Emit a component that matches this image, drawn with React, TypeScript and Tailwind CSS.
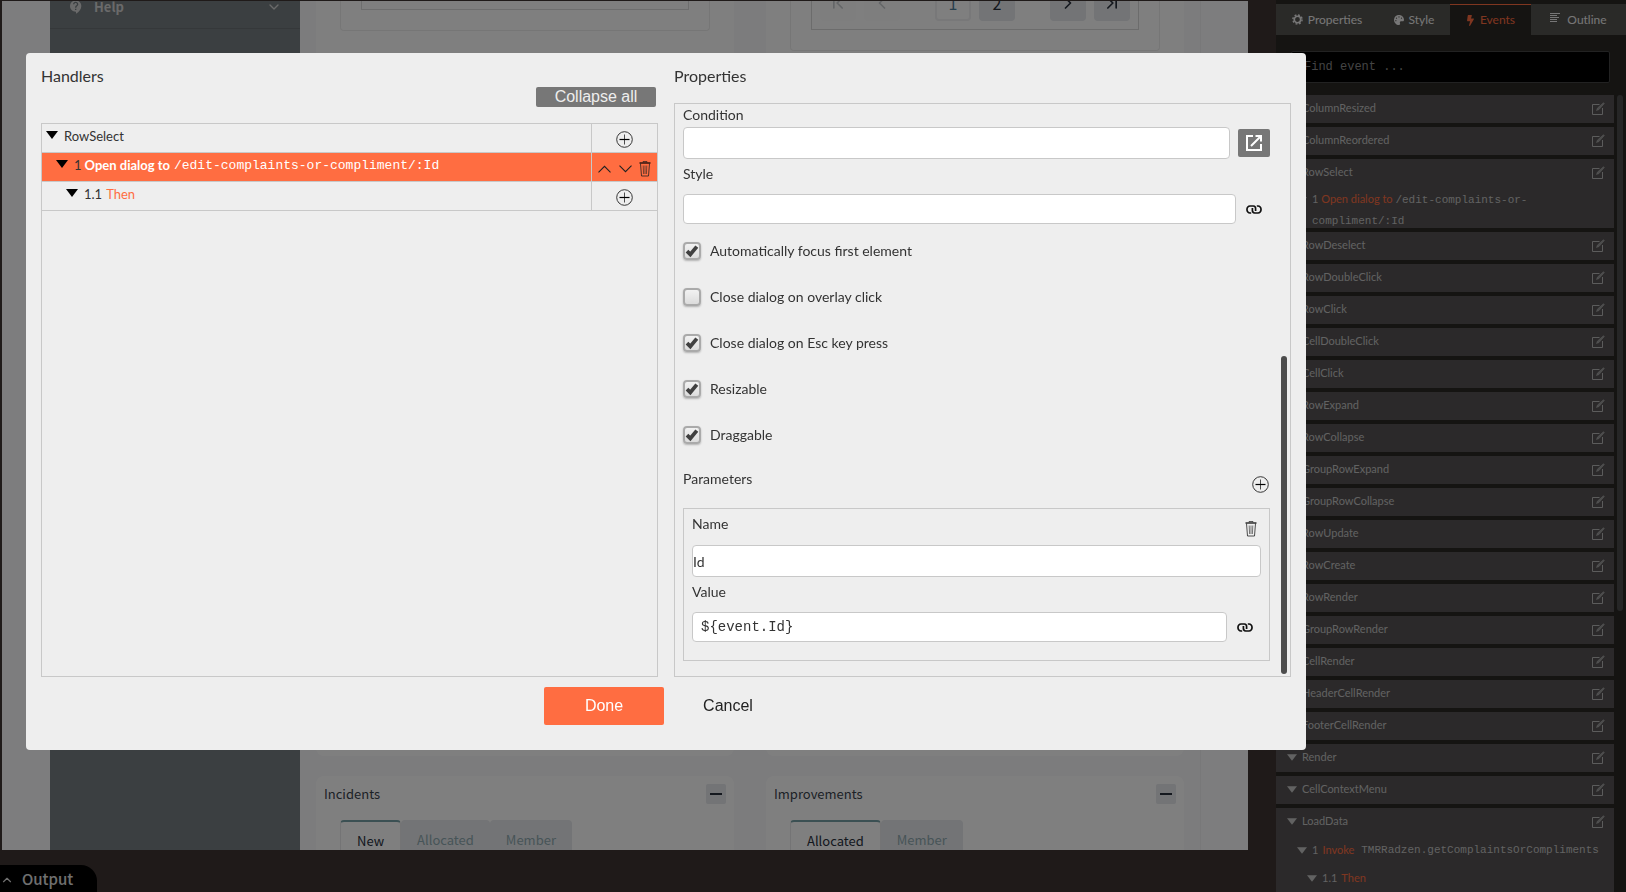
import { useState } from 'react';
import { FaBolt, FaPalette } from 'react-icons/fa';
import { MdContactSupport } from 'react-icons/md';
import { ChevronDown, ChevronFirst, ChevronLast, ChevronLeft, ChevronRight, ChevronUp } from 'lucide-react';

const EVENTS_BEFORE = ['ColumnResized', 'ColumnReordered'];

const EVENTS_AFTER = [
  'RowDeselect',
  'RowDoubleClick',
  'RowClick',
  'CellDoubleClick',
  'CellClick',
  'RowExpand',
  'RowCollapse',
  'GroupRowExpand',
  'GroupRowCollapse',
  'RowUpdate',
  'RowCreate',
  'RowRender',
  'GroupRowRender',
  'CellRender',
  'HeaderCellRender',
  'FooterCellRender',
  'Render',
  'CellContextMenu',
];

const OPTIONS = [
  { id: 'focus', label: 'Automatically focus first element', checked: true },
  { id: 'overlay', label: 'Close dialog on overlay click', checked: false },
  { id: 'esc', label: 'Close dialog on Esc key press', checked: true },
  { id: 'resizable', label: 'Resizable', checked: true },
  { id: 'draggable', label: 'Draggable', checked: true },
];

/* ---------- icons ---------- */

function Triangle({ className }: { className: string }) {
  return (
    <svg viewBox="0 0 12 8" className={className} fill="currentColor">
      <path d="M0 0h12L6 8z" />
    </svg>
  );
}

function PlusCircle() {
  return (
    <svg viewBox="0 0 17 17" className="h-[17px] w-[17px]" fill="none" stroke="#222">
      <circle cx="8.5" cy="8.5" r="7.8" strokeWidth="0.9" />
      <path d="M8.5 3.5v10" strokeWidth="0.8" />
      <path d="M3.5 8.5h10" strokeWidth="1.2" stroke="#000" />
    </svg>
  );
}

function Trash() {
  return (
    <svg viewBox="0 0 12 16" className="h-4 w-3" fill="none" stroke="#222" strokeWidth="0.8">
      <path d="M0.5 2h11" stroke="#000" strokeWidth="1.2" />
      <path d="M4 1.4V0.6h4v0.8" />
      <path d="M1.5 2.5l1 12.5h7l1-12.5" />
      <path d="M4.2 4.5l.4 8.5M6 4.5V13M7.8 4.5L7.4 13" strokeWidth="0.6" />
    </svg>
  );
}

function ThinChevron({ up }: { up?: boolean }) {
  return (
    <svg viewBox="0 0 13 8" className="h-2 w-[13px]" fill="none" stroke="#222" strokeWidth="1.1">
      <path d={up ? 'M0.5 7.3l6-6 6 6' : 'M0.5 0.7l6 6 6-6'} />
    </svg>
  );
}

function LinkIcon() {
  return (
    <svg viewBox="0 0 16 9" className="h-[9px] w-4" fill="none" stroke="#111" strokeWidth="1.7">
      <path d="M5.2 8H4A3.1 3.1 0 0 1 1 4.8V4.2A3.1 3.1 0 0 1 4 1H7.4A2.4 2.4 0 0 1 9.6 3.4V6" />
      <path d="M10.8 1H12a3.1 3.1 0 0 1 3 3.2v.6A3.1 3.1 0 0 1 12 8H8.6A2.4 2.4 0 0 1 6.4 5.6V3" />
    </svg>
  );
}

function OpenIcon() {
  return (
    <svg viewBox="0 0 16 16" className="h-4 w-4" fill="none" stroke="#fff" strokeWidth="2">
      <path d="M7 1H1v14h14V9" />
      <path d="M9.5 1H15v5.5M15 1L5 11" />
    </svg>
  );
}

function EditIcon() {
  return (
    <svg viewBox="0 0 13 13" className="h-[13px] w-[13px]" fill="none" stroke="#b8b8b8">
      <path d="M7.5 2.5h-7v10h10v-6.5" />
      <path d="M4.5 8.5l1-2.5L11.5.7l.8.8L7 7.5z" fill="#999" strokeWidth="0.5" />
    </svg>
  );
}

function GearIcon() {
  return (
    <svg viewBox="0 0 12 12" className="h-[11px] w-[11px]" fill="none" stroke="currentColor">
      <circle cx="6" cy="6" r="3.5" strokeWidth="1.8" />
      <circle cx="6" cy="6" r="5" strokeWidth="1.6" strokeDasharray="2 1.93" />
    </svg>
  );
}

function OutlineIcon() {
  return (
    <svg viewBox="0 0 10 9" className="mb-1 h-[9px] w-[10px]" stroke="currentColor">
      <path d="M0 .5h10M0 2.5h7M0 4.5h9M0 6.5h7M0 8.5h7" />
    </svg>
  );
}

/* ---------- page under the dialog ---------- */

interface PagerButtonProps {
  label: string;
  tone: 'ghost' | 'active' | 'solid';
  children: React.ReactNode;
}

function PagerButton({ label, tone, children }: PagerButtonProps) {
  const tones = {
    ghost: 'bg-[#fcfcfc] text-[#c8ccd0]',
    active: 'border-2 border-[#f0f0f2] text-[#4f7f9b]',
    solid: 'bg-[#e6e8ec] text-[#28303c]',
  };
  return (
    <button aria-label={label} className={`flex h-9 w-9 items-center justify-center rounded text-base ${tones[tone]}`}>
      {children}
    </button>
  );
}

function Card({ title, tabs }: { title: string; tabs: string[] }) {
  return (
    <section className="h-[200px] rounded-lg bg-white px-2">
      <div className="flex items-start justify-between pt-2">
        <h3 className="text-[13px] leading-5 text-[#3a434d]">{title}</h3>
        <button aria-label={`Collapse ${title}`} className="flex h-5 w-5 items-center justify-center rounded-xs bg-[#e6e8ec]">
          <span className="h-0.5 w-3 bg-[#28303c]" />
        </button>
      </div>
      <div className="mt-4 flex px-4">
        {tabs.map((tab, i) => (
          <button
            key={tab}
            className={
              i === 0
                ? 'h-10 rounded-t border border-t-2 border-[#e8e8ea] border-t-[#76a0a6] px-4 text-[13px] text-[#28303c]'
                : 'h-10 rounded-t bg-[#e6e8ec] px-4 text-[13px] text-[#8fa9b0]'
            }
          >
            {tab}
          </button>
        ))}
      </div>
    </section>
  );
}

function Canvas() {
  return (
    <div className="mt-px mr-7 ml-0.5 flex flex-1 overflow-hidden bg-[#fafafd] font-['Noto_Sans_CJK_SC',sans-serif]">
      <div className="w-12 shrink-0" />
      <nav className="w-[250px] shrink-0 bg-[#767e82]">
        <a href="#help" className="-mt-4 flex h-11 items-center border-b border-[#6a7175] px-[18px] text-[#d4d4d4]">
          <MdContactSupport className="h-4 w-4" />
          <span className="ml-[10px] text-[13px] font-bold">Help</span>
          <ChevronDown className="ml-auto h-4 w-4" />
        </a>
      </nav>
      <main className="grid flex-1 grid-cols-2 content-start gap-x-8 gap-y-5 bg-[#f8f8fb] px-4">
        <section className="h-[755px] rounded-b-lg bg-white px-6">
          <div className="h-[30px] rounded-b border border-t-0 border-[#ededed] px-5">
            <div className="h-[9px] border border-t-0 border-[#dcdcdc]" />
          </div>
        </section>
        <section className="h-[755px] rounded-b-lg bg-white px-6">
          <div className="h-[50px] rounded-b border border-t-0 border-[#ededed] px-5">
            <div className="flex h-[29px] justify-between border border-t-0 border-[#d8d8d8] px-2">
              <div className="-mt-4 flex gap-2">
                <PagerButton label="First page" tone="ghost"><ChevronFirst className="h-5 w-5" /></PagerButton>
                <PagerButton label="Previous page" tone="ghost"><ChevronLeft className="h-5 w-5" /></PagerButton>
              </div>
              <div className="-mt-4 flex gap-2">
                <PagerButton label="Page 1" tone="active">1</PagerButton>
                <PagerButton label="Page 2" tone="solid">2</PagerButton>
              </div>
              <div className="-mt-4 flex gap-2">
                <PagerButton label="Next page" tone="solid"><ChevronRight className="h-5 w-5" /></PagerButton>
                <PagerButton label="Last page" tone="solid"><ChevronLast className="h-5 w-5" /></PagerButton>
              </div>
            </div>
          </div>
        </section>
        <Card title="Incidents" tabs={['New', 'Allocated', 'Member']} />
        <Card title="Improvements" tabs={['Allocated', 'Member']} />
      </main>
      <div className="w-12 shrink-0 border-l border-[#f0f0f3]" />
    </div>
  );
}

/* ---------- events sidebar ---------- */

function EventRow({ name, children }: { name: string; children?: React.ReactNode }) {
  return (
    <li className="bg-[#565354] pr-[9px] pl-[11px] text-[11px]">
      <div className="flex h-7 items-center pb-px">
        <Triangle className="h-[7px] w-[10px]" />
        <span className="ml-[5px]">{name}</span>
        <button aria-label={`Edit ${name}`} className="ml-auto">
          <EditIcon />
        </button>
      </div>
      {children}
    </li>
  );
}

function Sidebar() {
  return (
    <aside className="flex w-[350px] shrink-0 flex-col bg-[#2a2825] font-['Lato',sans-serif] text-[#c4c4c4]">
      <div className="mt-1 flex h-[31px] bg-[#555451] text-xs text-[#eee]">
        <button className="flex w-[102px] items-center justify-center gap-[5px]">
          <GearIcon />
          Properties
        </button>
        <button className="flex w-[72px] items-center justify-center gap-[5px]">
          <FaPalette className="h-[10px] w-[10px]" />
          Style
        </button>
        <button className="flex w-[81px] items-center justify-center gap-[5px] border-t border-[#ff6d41] bg-[#2a2825] text-[#ff6d41]">
          <FaBolt className="h-[11px] w-[9px]" />
          Events
        </button>
        <button className="flex flex-1 items-center justify-center gap-[7px]">
          <OutlineIcon />
          Outline
        </button>
      </div>
      <input
        aria-label="Find event"
        placeholder="Find event ..."
        className="mt-4 mr-4 ml-[15px] h-8 rounded-xs border border-[#444] bg-black px-3 font-['Liberation_Mono',monospace] text-xs placeholder:text-[#888]"
      />
      <div className="mt-3 flex min-h-0 flex-1 gap-[3px] overflow-hidden">
        <ul className="flex min-w-0 flex-1 flex-col gap-1">
          {EVENTS_BEFORE.map((name) => (
            <EventRow key={name} name={name} />
          ))}
          <EventRow name="RowSelect">
            <div className="flex h-[41px] pt-0.5 pl-[10px] leading-5">
              <Triangle className="mt-2 h-[7px] w-[10px] shrink-0" />
              <p className="ml-[5px] w-60">
                1 <span className="text-[#ff6d41]">Open dialog to</span>{' '}
                <code className="font-['Liberation_Mono',monospace]">/edit-complaints-or-compliment/:Id</code>
              </p>
            </div>
          </EventRow>
          {EVENTS_AFTER.map((name) => (
            <EventRow key={name} name={name} />
          ))}
          <EventRow name="LoadData">
            <div className="flex h-7 items-center pl-[10px]">
              <Triangle className="h-[7px] w-[10px]" />
              <span className="ml-[5px]">1</span>
              <span className="ml-1 text-[#ff6d41]">Invoke</span>
              <code className="ml-[7px] font-['Liberation_Mono',monospace]">TMRRadzen.getComplaintsOrCompliments</code>
            </div>
            <div className="flex h-7 items-center pl-5">
              <Triangle className="h-[7px] w-[10px]" />
              <span className="ml-[5px]">1.1</span>
              <span className="ml-1 text-[#ff6d41]">Then</span>
            </div>
          </EventRow>
        </ul>
        <div className="mr-[3px] h-[516px] w-[6px] rounded-full bg-[#4c4c4c]" />
      </div>
    </aside>
  );
}

/* ---------- dialog ---------- */

function Handlers() {
  return (
    <section className="flex flex-col">
      <h2 className="mt-3 h-[22px] text-base leading-[22px]">Handlers</h2>
      <button className="mr-0.5 h-5 w-[120px] self-end rounded-xs bg-[#777] font-['Liberation_Sans',sans-serif] text-base leading-5 text-[#eee]">
        Collapse all
      </button>
      <div className="mt-4 flex-1 border border-[#c8c8c8] text-[13px]">
        <div className="flex h-[29px] border-b border-[#c8c8c8]">
          <div className="flex flex-1 items-start pl-1 leading-6">
            <Triangle className="mt-[7px] mr-[6px] h-2 w-3 text-black" />
            RowSelect
          </div>
          <div className="flex w-[66px] items-center justify-center border-l border-[#c8c8c8] pt-[3px]">
            <button aria-label="Add to RowSelect"><PlusCircle /></button>
          </div>
        </div>
        <div className="flex h-[29px] border-b border-[#c8c8c8] bg-[#ff6d41]">
          <div className="flex flex-1 items-start pl-[14px] leading-6">
            <Triangle className="mt-[7px] mr-[6px] h-2 w-3 text-black" />
            1
            <span className="ml-[3px] font-bold text-white">Open dialog to</span>
            <code className="ml-1 font-['Liberation_Mono',monospace] leading-[26px] text-white">/edit-complaints-or-compliment/:Id</code>
          </div>
          <div className="flex w-[66px] items-center justify-between border-l border-[#c8c8c8] px-[6px] pt-[3px]">
            <button aria-label="Move up"><ThinChevron up /></button>
            <button aria-label="Move down"><ThinChevron /></button>
            <button aria-label="Delete handler"><Trash /></button>
          </div>
        </div>
        <div className="flex h-[29px] border-b border-[#c8c8c8]">
          <div className="flex flex-1 items-start pl-6 leading-6">
            <Triangle className="mt-[7px] mr-[6px] h-2 w-3 text-black" />
            1.1
            <span className="ml-1 text-[#ff6d41]">Then</span>
          </div>
          <div className="flex w-[66px] items-center justify-center border-l border-[#c8c8c8] pt-[3px]">
            <button aria-label="Add to Then"><PlusCircle /></button>
          </div>
        </div>
      </div>
    </section>
  );
}

function Properties() {
  const [options, setOptions] = useState(OPTIONS);

  const toggle = (id: string) =>
    setOptions(options.map((o) => (o.id === id ? { ...o, checked: !o.checked } : o)));

  return (
    <section className="flex flex-col">
      <h2 className="mt-3 h-[22px] text-base leading-[22px]">Properties</h2>
      <div className="relative mt-4 border border-[#c8c8c8] pr-5 pb-[15px] pl-2 text-sm">
        <label htmlFor="condition" className="block leading-[22px]">Condition</label>
        <div className="mt-px flex items-center gap-2">
          <input id="condition" className="h-8 flex-1 rounded border border-[#c8c8c8] bg-white px-2" />
          <button aria-label="Open condition editor" className="flex h-7 w-8 items-center justify-center rounded-xs bg-[#777]">
            <OpenIcon />
          </button>
        </div>
        <label htmlFor="style" className="mt-1 block leading-[22px]">Style</label>
        <div className="mt-[9px] flex items-center">
          <input id="style" className="h-[30px] flex-1 rounded border border-[#c8c8c8] bg-white px-2" />
          <button aria-label="Bind style" className="mr-2 ml-[10px]"><LinkIcon /></button>
        </div>

        <div className="mt-1">
          {options.map((o) => (
            <label key={o.id} className="flex h-[46px] items-center gap-[9px]">
              <span className="relative h-[18px] w-[18px]">
                <input
                  type="checkbox"
                  checked={o.checked}
                  onChange={() => toggle(o.id)}
                  className="block h-[18px] w-[18px] appearance-none rounded border-2 border-[#aaa] bg-linear-to-b from-[#f2f2f2] to-[#dcdcdc] shadow-[0_1px_2px_rgba(0,0,0,0.25)]"
                />
                {o.checked && (
                  <svg viewBox="0 0 18 18" className="pointer-events-none absolute inset-0" fill="none" stroke="#404040" strokeWidth="3.8">
                    <path d="M4 9.2l3.3 3.2L13.8 4.6" />
                  </svg>
                )}
              </span>
              {o.label}
            </label>
          ))}
        </div>

        <div className="mt-[10px] flex h-[40px] items-start justify-between">
          <span className="leading-[22px]">Parameters</span>
          <button aria-label="Add parameter" className="mt-2 mr-px"><PlusCircle /></button>
        </div>
        <div className="border border-[#c8c8c8] px-2 pb-[18px]">
          <div className="flex items-start justify-between pt-1">
            <label htmlFor="name" className="leading-[22px]">Name</label>
            <button aria-label="Delete parameter" className="mt-2 mr-1"><Trash /></button>
          </div>
          <input id="name" defaultValue="Id" className="mt-2 h-8 w-full rounded border border-[#c8c8c8] bg-white" />
          <label htmlFor="value" className="mt-1 block leading-[22px]">Value</label>
          <div className="mt-[9px] flex items-center">
            <input
              id="value"
              defaultValue="${event.Id}"
              className="h-[30px] flex-1 rounded border border-[#c8c8c8] bg-white px-2 font-['Liberation_Mono',monospace] text-sm"
            />
            <button aria-label="Bind value" className="mr-2 ml-[10px]"><LinkIcon /></button>
          </div>
        </div>
        <div className="absolute right-[3px] bottom-0.5 h-[318px] w-[6px] rounded-full bg-[#4c4c4c]" />
      </div>
    </section>
  );
}

export default function App() {
  return (
    <div className="flex h-screen overflow-hidden bg-[#3e3432]">
      <div className="flex min-w-0 flex-1 flex-col">
        <Canvas />
        <footer className="flex h-[42px] shrink-0 items-end">
          <button className="flex h-[27px] w-[97px] items-center gap-2 rounded-tr-2xl bg-black pt-0.5 font-['Noto_Sans_CJK_SC',sans-serif] text-[15px] font-medium text-[#e0e0e0]">
            <ChevronUp className="h-[14px] w-[14px]" />
            Output
          </button>
        </footer>
      </div>
      <Sidebar />

      <div className="fixed inset-0 bg-black/50 pt-[53px] pr-[320px] pl-[26px]">
        <div role="dialog" className="rounded bg-[#eee] px-[15px] pb-[25px] font-['Lato',sans-serif] text-[#333]">
          <div className="grid grid-cols-2 gap-4">
            <Handlers />
            <Properties />
          </div>
          <div className="mt-[10px] grid grid-cols-2 gap-4 font-['Liberation_Sans',sans-serif] text-base">
            <button className="mr-[-6px] h-[38px] w-[120px] justify-self-end rounded-xs bg-[#ff6d41] text-white">Done</button>
            <button className="ml-[-6px] h-[38px] w-[120px] text-[#222]">Cancel</button>
          </div>
        </div>
      </div>
    </div>
  );
}
